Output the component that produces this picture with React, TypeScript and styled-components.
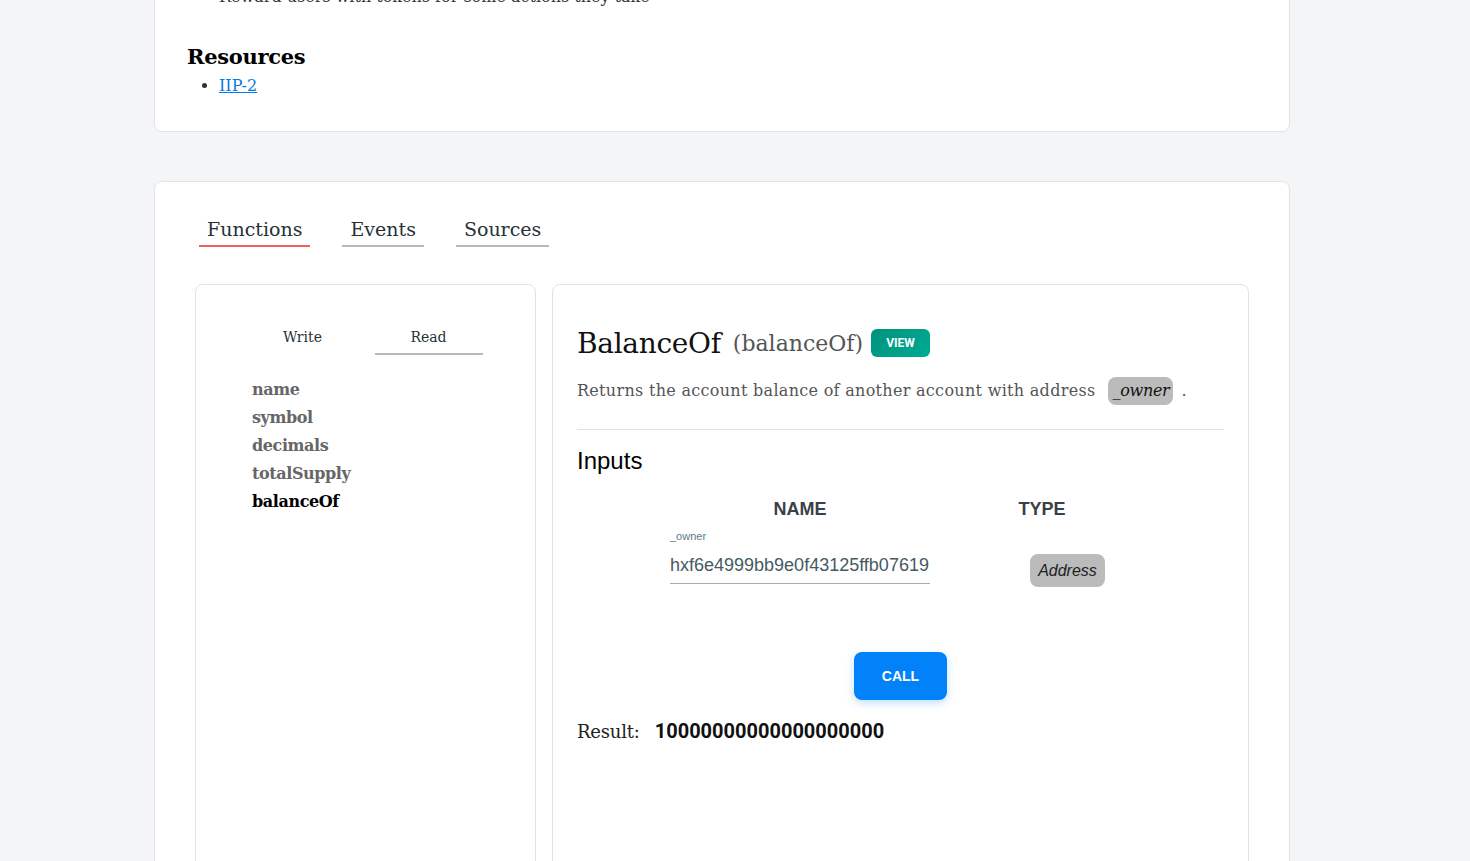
import React from "react";
import styled, { createGlobalStyle } from "styled-components";

const SLAB = `"DejaVu Serif", "Liberation Serif", serif`;
const SANS = `"Liberation Sans", Arial, sans-serif`;
const ROBOTO = `Roboto, "Liberation Sans", sans-serif`;

const GlobalStyle = createGlobalStyle`
  html, body { margin: 0; padding: 0; background: #f4f5f7; }
  body { font-family: ${SLAB}; overflow: hidden; }
  * { box-sizing: border-box; }
`;

const Page = styled.div`
  width: 1136px;
  margin-left: 154px;
  display: flex;
  flex-direction: column;
  gap: 49px;
`;

const Card = styled.section`
  background: #fff;
  border: 1px solid #e2e3e6;
  border-radius: 8px;
`;

const AboutCard = styled(Card)`
  margin-top: -50px;
  padding: 32px 32px 31px;
`;

const ContractCard = styled(Card)`
  padding: 33px 40px 0;
  min-height: 760px;
`;

const BulletList = styled.ul`
  margin: 0;
  padding-left: 32px;
  list-style: disc;
  color: #555;
`;

const BulletItem = styled.li`
  font-size: 16px;
  line-height: 28px;
  color: #333;
`;

const SectionTitle = styled.h3`
  margin: 31px 0 0;
  font-size: 21px;
  line-height: 30px;
  font-weight: 700;
  color: #000;
  letter-spacing: -0.3px;
`;

const Link = styled.a`
  color: #0a7ae6;
  text-decoration: underline;
  font-size: 16px;
`;

const TabBar = styled.div`
  display: flex;
  gap: 32px;
  padding-left: 4px;
`;

const Tab = styled.div<{ $active?: boolean }>`
  padding: 0 8px 2px;
  border-bottom: 2px solid ${(p) => (p.$active ? "#f25f5c" : "#b9b9b9")};
  font-size: 19px;
  line-height: 28px;
  color: #263238;
  letter-spacing: 0;
`;

const Panels = styled.div`
  margin-top: 37px;
  display: grid;
  grid-template-columns: 341px 697px;
  gap: 16px;
`;

const Panel = styled.div`
  background: #fff;
  border: 1px solid #e2e3e6;
  border-radius: 8px;
  min-height: 640px;
`;

const ListPanel = styled(Panel)`
  padding-top: 40px;
`;

const SubTabs = styled.div`
  display: flex;
  justify-content: center;
  gap: 18px;
`;

const SubTab = styled.div<{ $active?: boolean }>`
  width: 108px;
  text-align: center;
  font-size: 14px;
  line-height: 24px;
  padding-bottom: 4px;
  color: #263238;
  border-bottom: 2px solid ${(p) => (p.$active ? "#b9b9b9" : "transparent")};
`;

const FnList = styled.div`
  margin-top: 21px;
  padding-left: 56px;
  display: flex;
  flex-direction: column;
`;

const FnItem = styled.div<{ $active?: boolean }>`
  font-size: 16px;
  line-height: 28px;
  font-weight: 700;
  letter-spacing: -0.4px;
  color: ${(p) => (p.$active ? "#000" : "#666")};
`;

const DetailPanel = styled(Panel)`
  padding: 38px 24px 0;
`;

const TitleRow = styled.div`
  display: flex;
  align-items: center;
  height: 40px;
`;

const FnTitle = styled.h2`
  margin: 0;
  font-size: 28px;
  font-weight: 400;
  color: #111;
  letter-spacing: -0.3px;
`;

const FnSub = styled.span`
  margin-left: 12px;
  font-size: 22px;
  color: #555;
  letter-spacing: 0;
`;

const Badge = styled.span`
  margin-left: 8px;
  width: 59px;
  height: 28px;
  border-radius: 6px;
  background: linear-gradient(135deg, #00927d, #00ab93);
  color: #fff;
  font-family: ${ROBOTO};
  font-weight: 700;
  font-size: 12px;
  display: flex;
  align-items: center;
  justify-content: center;
`;

const Desc = styled.div`
  margin-top: 14px;
  display: flex;
  align-items: center;
  font-size: 16px;
  line-height: 28px;
  color: #555;
  letter-spacing: 0.3px;
`;

const ParamChip = styled.span`
  margin-left: 13px;
  width: 65px;
  height: 28px;
  border-radius: 8px;
  background: #bbbbbb;
  color: #111;
  font-style: italic;
  letter-spacing: -0.3px;
  display: flex;
  align-items: center;
  justify-content: center;
`;

const Dot = styled.span`
  margin-left: 8px;
`;

const Divider = styled.hr`
  margin: 24px 0 0;
  border: 0;
  height: 1px;
  background: #e0e0e0;
`;

const InputsTitle = styled.h4`
  margin: 15px 0 0;
  font-family: ${SANS};
  font-size: 24px;
  line-height: 32px;
  font-weight: 400;
  color: #000;
`;

const InputsTable = styled.div`
  margin-top: 20px;
  padding-left: 93px;
  display: grid;
  grid-template-columns: 260px 224px;
  row-gap: 8px;
`;

const Th = styled.div`
  font-family: ${SANS};
  font-weight: 700;
  font-size: 18px;
  line-height: 24px;
  color: #3a4049;
  text-align: center;
`;

const Field = styled.div`
  display: flex;
  flex-direction: column;
`;

const FieldLabel = styled.label`
  font-family: ${SANS};
  font-size: 11px;
  line-height: 14px;
  color: #5d7c8c;
`;

const FieldValue = styled.div`
  margin-top: 10px;
  padding-bottom: 6px;
  border-bottom: 1px solid #a5b0b6;
  font-family: ${SANS};
  font-size: 18px;
  line-height: 24px;
  color: #455a64;
  white-space: nowrap;
  overflow: hidden;
`;

const TypeChip = styled.span`
  align-self: end;
  justify-self: start;
  margin: 0 0 -3px 100px;
  width: 75px;
  height: 33px;
  border-radius: 8px;
  background: #bbbbbb;
  font-family: ${SANS};
  font-style: italic;
  font-size: 16px;
  color: #222;
  display: flex;
  align-items: center;
  justify-content: center;
`;

const CallButton = styled.button`
  display: block;
  margin: 68px auto 0;
  width: 93px;
  height: 48px;
  border: none;
  border-radius: 8px;
  background: #0282f8;
  box-shadow: 0 3px 8px rgba(2, 130, 248, 0.25);
  color: #fff;
  font-family: ${SANS};
  font-weight: 700;
  font-size: 14px;
`;

const ResultRow = styled.div`
  margin-top: 17px;
  display: flex;
  align-items: baseline;
  line-height: 28px;
`;

const ResultLabel = styled.span`
  font-size: 18px;
  color: #222;
  letter-spacing: -0.2px;
`;

const ResultValue = styled.span`
  margin-left: 15px;
  font-family: ${ROBOTO};
  font-weight: 700;
  font-size: 20px;
  color: #111;
`;

export default function App() {
  const fns = ["name", "symbol", "decimals", "totalSupply", "balanceOf"];
  return (
    <>
      <GlobalStyle />
      <Page>
        <AboutCard>
          <BulletList>
            <BulletItem>Reward users with tokens for some actions they take</BulletItem>
          </BulletList>
          <SectionTitle>Resources</SectionTitle>
          <BulletList>
            <BulletItem>
              <Link href="#">IIP-2</Link>
            </BulletItem>
          </BulletList>
        </AboutCard>

        <ContractCard>
          <TabBar>
            <Tab $active>Functions</Tab>
            <Tab>Events</Tab>
            <Tab>Sources</Tab>
          </TabBar>
          <Panels>
            <ListPanel>
              <SubTabs>
                <SubTab>Write</SubTab>
                <SubTab $active>Read</SubTab>
              </SubTabs>
              <FnList>
                {fns.map((f) => (
                  <FnItem key={f} $active={f === "balanceOf"}>
                    {f}
                  </FnItem>
                ))}
              </FnList>
            </ListPanel>
            <DetailPanel>
              <TitleRow>
                <FnTitle>BalanceOf</FnTitle>
                <FnSub>(balanceOf)</FnSub>
                <Badge>VIEW</Badge>
              </TitleRow>
              <Desc>
                Returns the account balance of another account with address
                <ParamChip>_owner</ParamChip>
                <Dot>.</Dot>
              </Desc>
              <Divider />
              <InputsTitle>Inputs</InputsTitle>
              <InputsTable>
                <Th>NAME</Th>
                <Th>TYPE</Th>
                <Field>
                  <FieldLabel>_owner</FieldLabel>
                  <FieldValue>hxf6e4999bb9e0f43125ffb07619</FieldValue>
                </Field>
                <TypeChip>Address</TypeChip>
              </InputsTable>
              <CallButton>CALL</CallButton>
              <ResultRow>
                <ResultLabel>Result:</ResultLabel>
                <ResultValue>10000000000000000000</ResultValue>
              </ResultRow>
            </DetailPanel>
          </Panels>
        </ContractCard>
      </Page>
    </>
  );
}
